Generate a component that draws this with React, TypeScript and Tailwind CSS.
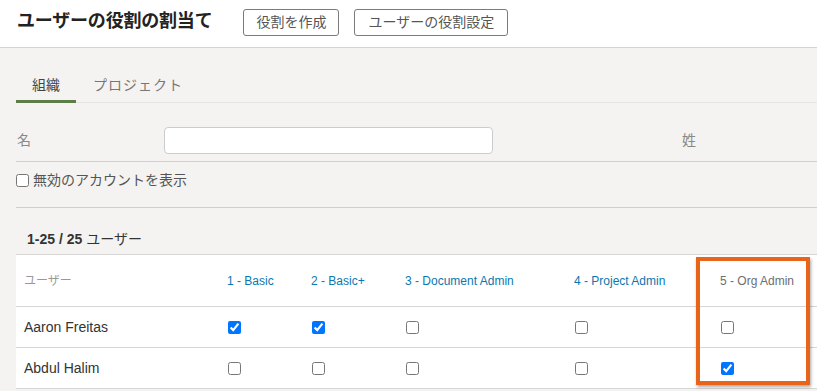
const font = "font-['Liberation_Sans','Noto_Sans_CJK_JP',sans-serif]";

const roles = [
  { name: "1 - Basic", link: true },
  { name: "2 - Basic+", link: true },
  { name: "3 - Document Admin", link: true },
  { name: "4 - Project Admin", link: true },
  { name: "5 - Org Admin", link: false },
];

const users = [
  { name: "Aaron Freitas", checks: [true, true, false, false, false] },
  { name: "Abdul Halim", checks: [false, false, false, false, true] },
];

const grid = "grid grid-cols-[203px_84px_94px_169px_146px_1fr]";

export default function App() {
  return (
    <div className={`min-h-screen w-[817px] overflow-hidden bg-[#f4f3f1] ${font}`}>
      {/* ヘッダー */}
      <div className="h-[48px] bg-white border-b border-[#d4d4d4] flex items-center pl-[17px]">
        <h1 className="text-[18px] font-bold text-[#222] tracking-[-0.2px] leading-none mr-[31px] -mt-[5px]">
          ユーザーの役割の割当て
        </h1>
        <button className="h-[27px] px-[12px] border border-[#7b7b7b] rounded-[3px] text-[14px] text-[#555] mr-[15px] -mt-[3px]">
          役割を作成
        </button>
        <button className="h-[27px] px-[13px] border border-[#7b7b7b] rounded-[3px] text-[14px] text-[#555] -mt-[3px]">
          ユーザーの役割設定
        </button>
      </div>

      <div className="pl-[16px] pt-[17px]">
        {/* タブ */}
        <div className="flex border-b border-[#e6e5e3] h-[38px]">
          <div className="w-[60px] text-center pt-[10px] text-[14px] text-[#444] leading-[20px] border-b-[3px] border-[#5d7d48] -mb-px">
            組織
          </div>
          <div className="pl-[17px] pt-[10px] text-[14px] text-[#777] leading-[20px] tracking-[1px]">
            プロジェクト
          </div>
        </div>

        {/* 検索 */}
        <div className="flex items-center pt-[24px] pb-[7px] border-b border-[#d0cfcd]">
          <span className="w-[148px] pl-[1px] text-[14px] text-[#888]">名</span>
          <input className="w-[329px] h-[27px] bg-white border border-[#cccccc] rounded-[4px]" />
          <span className="ml-[189px] text-[14px] text-[#888]">姓</span>
        </div>

        <label className="flex items-center gap-[4px] h-[46px] pb-[9px] border-b border-[#d0cfcd] text-[14px] text-[#555]">
          <input type="checkbox" className="w-[13px] h-[13px]" />
          無効のアカウントを表示
        </label>

        <div className="pl-[11px] pt-[21px] pb-[5px] h-[46px] text-[14px] leading-[20px] text-[#333]">
          <span className="font-bold">1-25 / 25</span> ユーザー
        </div>

        {/* テーブル */}
        <div className="relative bg-white">
          <div className={`${grid} h-[53px] items-center border-t border-b border-[#d6d6d6] text-[12px]`}>
            <div className="pl-[8px] text-[#999]">ユーザー</div>
            {roles.map((r) => (
              <div key={r.name} className={`pl-[8px] ${r.link ? "text-[#0b77b0]" : "text-[#6e6e6e]"}`}>
                {r.name}
              </div>
            ))}
          </div>
          {users.map((u) => (
            <div key={u.name} className={`${grid} h-[41px] items-center border-b border-[#d6d6d6]`}>
              <div className="pl-[8px] text-[14px] text-[#333]">{u.name}</div>
              {u.checks.map((c, i) => (
                <div key={i} className="pl-[9px] flex items-center">
                  <input type="checkbox" defaultChecked={c} className="w-[13px] h-[13px]" />
                </div>
              ))}
            </div>
          ))}

          {/* 強調枠 */}
          <div className="absolute left-[680px] top-[3px] w-[114px] h-[128px] border-[4px] border-[#e8641b] shadow-[1px_2px_3px_rgba(0,0,0,0.35)] pointer-events-none" />
        </div>
      </div>
    </div>
  );
}
